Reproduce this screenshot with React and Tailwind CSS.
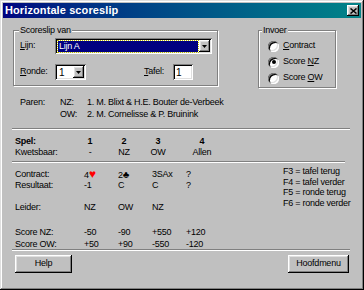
import React from "react";

const raised =
  "bg-[#c0c0c0] shadow-[inset_-1px_-1px_0_#000,inset_1px_1px_0_#fff,inset_-2px_-2px_0_#808080,inset_2px_2px_0_#dfdfdf]";
const sunken =
  "bg-white shadow-[inset_1px_1px_0_#808080,inset_-1px_-1px_0_#fff,inset_2px_2px_0_#000,inset_-2px_-2px_0_#dfdfdf]";
const etched = "border border-[#808080] shadow-[1px_1px_0_#fff,inset_1px_1px_0_#fff]";

const DropButton = () => (
  <div className={`${raised} w-[11px] h-[12px] flex items-center justify-center`}>
    <svg width="5" height="3" viewBox="0 0 5 3">
      <path d="M0 0h5L2.5 3z" fill="#000" />
    </svg>
  </div>
);

const Radio = ({ checked, children }) => (
  <div className="flex items-center h-[16px]">
    <div className={`${sunken} rounded-full w-[11px] h-[11px] flex items-center justify-center`}>
      {checked && <div className="w-[4px] h-[4px] rounded-full bg-black" />}
    </div>
    <span className="ml-[4px]">{children}</span>
  </div>
);

const Separator = ({ w }) => (
  <div className={`ml-[9px] h-[2px] border-t border-t-[#808080] border-b border-b-white ${w}`} />
);

const Cell = ({ children }) => <div className="w-[34px] whitespace-nowrap">{children}</div>;

const DataRow = ({ label, cells, className }) => (
  <div className={`flex h-[11px] leading-[11px] ${className}`}>
    <div className="w-[69px]">{label}</div>
    {cells.map((c, i) => (
      <Cell key={i}>{c}</Cell>
    ))}
  </div>
);

export default function App() {
  return (
    <div className="w-[364px] h-[290px] bg-[#c0c0c0] p-[3px] text-black text-[9px] tracking-[-0.25px] font-['Liberation_Sans',Arial,sans-serif] shadow-[inset_-1px_-1px_0_#000,inset_1px_1px_0_#dfdfdf,inset_-2px_-2px_0_#808080,inset_2px_2px_0_#fff] overflow-hidden">
      {/* title bar */}
      <div className="h-[15px] bg-linear-to-r from-[#000080] to-[#088488] flex items-center justify-between pl-[2px] pr-[2px]">
        <span className="text-white font-bold text-[11px] tracking-[0.1px] leading-[15px]">Horizontale scoreslip</span>
        <div className={`${raised} w-[12px] h-[11px] flex items-center justify-center`}>
          <svg width="7" height="6" viewBox="0 0 7 6">
            <path d="M0.5 0.5l6 5M6.5 0.5l-6 5" stroke="#000" strokeWidth="1.5" />
          </svg>
        </div>
      </div>

      {/* top groups */}
      <div className="flex items-start mt-[12px] h-[58px]">
        <div className={`${etched} relative ml-[10px] w-[205px] h-[56px] pl-[6px] pt-[7px]`}>
          <span className="absolute -top-[6px] left-[5px] px-[1px] bg-[#c0c0c0] leading-[11px]">Scoreslip van</span>
          <div className="flex items-center h-[16px]">
            <span className="w-[35px]">
              <span className="underline">L</span>ijn:
            </span>
            <div className={`${sunken} w-[157px] h-[16px] p-[2px] flex items-center`}>
              <div className="flex-1 h-[11px] mr-[1px] ml-[1px] bg-[#000080] outline outline-dotted outline-[#c0c000] text-white leading-[11px] pl-[1px]">
                Lijn A
              </div>
              <DropButton />
            </div>
          </div>
          <div className="flex items-center h-[16px] mt-[10px]">
            <span className="w-[35px]">
              <span className="underline">R</span>onde:
            </span>
            <div className={`${sunken} w-[31px] h-[16px] p-[2px] flex items-center`}>
              <span className="flex-1 pl-[2px] text-[10px]">1</span>
              <DropButton />
            </div>
            <span className="ml-[58px] w-[29px]">
              <span className="underline">T</span>afel:
            </span>
            <div className={`${sunken} w-[20px] h-[16px] pl-[3px] flex items-center text-[10px]`}>1</div>
          </div>
        </div>

        <div className={`${etched} relative ml-[40px] w-[78px] h-[58px] pl-[9px] pt-[7px]`}>
          <span className="absolute -top-[6px] left-[3px] px-[1px] bg-[#c0c0c0] leading-[11px]">Invoer</span>
          <Radio>
            <span className="underline">C</span>ontract
          </Radio>
          <Radio checked>
            Score <span className="underline">N</span>Z
          </Radio>
          <Radio>
            Score <span className="underline">O</span>W
          </Radio>
        </div>
      </div>

      {/* pairs */}
      <div className="mt-[8px] pl-[17px] leading-[12px]">
        <div className="flex">
          <span className="w-[40px]">Paren:</span>
          <span className="w-[27px]">NZ:</span>
          <span>1. M. Blixt &amp; H.E. Bouter de-Verbeek</span>
        </div>
        <div className="flex">
          <span className="w-[40px]" />
          <span className="w-[27px]">OW:</span>
          <span>2. M. Cornelisse &amp; P. Bruinink</span>
        </div>
      </div>

      <div className="mt-[8px]">
        <Separator w="w-[338px]" />
      </div>

      {/* header */}
      <div className="pl-[12px] mt-[6px] leading-[11px]">
        <div className="flex h-[11px] font-bold">
          <div className="w-[58px]">Spel:</div>
          <div className="w-[34px] text-center">1</div>
          <div className="w-[34px] text-center">2</div>
          <div className="w-[34px] text-center">3</div>
          <div className="w-[44px] ml-[5px] text-center">4</div>
        </div>
        <div className="flex h-[11px]">
          <div className="w-[58px]">Kwetsbaar:</div>
          <div className="w-[34px] text-center">-</div>
          <div className="w-[34px] text-center">NZ</div>
          <div className="w-[34px] text-center">OW</div>
          <div className="w-[44px] ml-[5px] text-center">Allen</div>
        </div>
      </div>

      <div className="mt-[3px]">
        <Separator w="w-[333px]" />
      </div>

      {/* results */}
      <div className="flex pl-[12px] h-[86px]">
        <div className="w-[268px] pt-[6px]">
          <DataRow
            label="Contract:"
            cells={[
              <>
                4<span className="text-[#ff0000] text-[12px] leading-[11px]">♥</span>
              </>,
              <>
                2<span className="text-[10px]">♣</span>
              </>,
              "3SAx",
              "?",
            ]}
          />
          <DataRow label="Resultaat:" cells={["-1", "C", "C", "?"]} />
          <DataRow label="Leider:" cells={["NZ", "OW", "NZ", ""]} className="mt-[11px]" />
          <DataRow label="Score NZ:" cells={["-50", "-90", "+550", "+120"]} className="mt-[14px]" />
          <DataRow label="Score OW:" cells={["+50", "+90", "-550", "-120"]} className="mt-[1px]" />
        </div>
        <div className="pt-[3px] leading-[10.5px]">
          <div>F3 = tafel terug</div>
          <div>F4 = tafel verder</div>
          <div>F5 = ronde terug</div>
          <div>F6 = ronde verder</div>
        </div>
      </div>

      <Separator w="w-[338px]" />

      {/* buttons */}
      <div className="flex justify-between mt-[4px] pl-[12px] pr-[12px]">
        <button className={`${raised} w-[57px] h-[18px] text-[9px]`}>Help</button>
        <button className={`${raised} w-[61px] h-[18px] text-[9px]`}>Hoofdmenu</button>
      </div>
    </div>
  );
}
